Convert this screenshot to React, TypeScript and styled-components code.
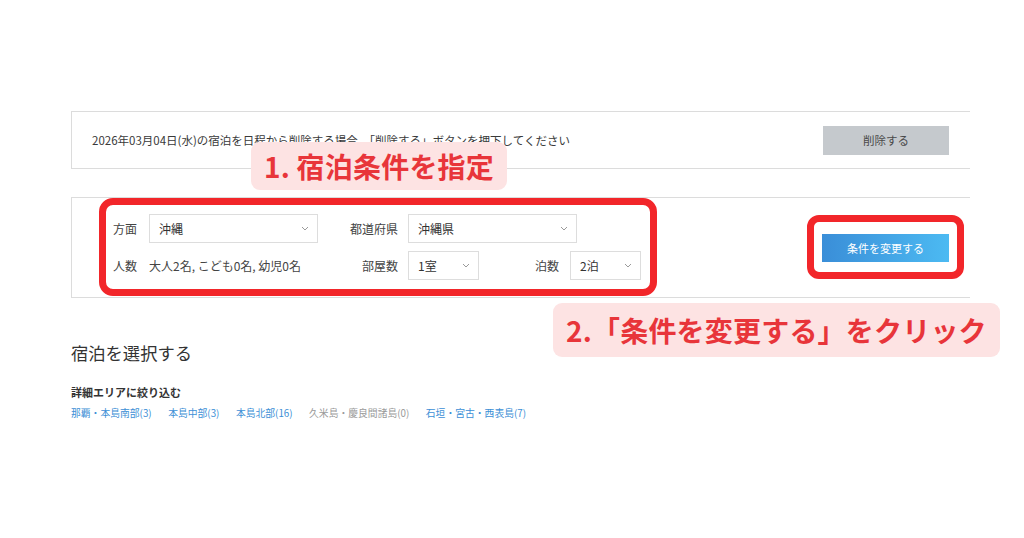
import styled, { createGlobalStyle } from 'styled-components';

const GlobalStyle = createGlobalStyle`
  html, body {
    margin: 0;
    padding: 0;
    background: #ffffff;
  }
  body {
    font-family: 'Noto Sans CJK JP', 'Noto Sans', sans-serif;
    color: #333333;
  }
`;

const Page = styled.div`
  position: relative;
  box-sizing: border-box;
  width: 1024px;
  height: 538px;
  padding: 111px 0 0 71px;
`;

const Content = styled.div`
  width: 899px;
`;

const Notice = styled.div`
  box-sizing: border-box;
  display: flex;
  align-items: center;
  justify-content: space-between;
  height: 58px;
  padding: 0 21px 0 20px;
  border: 1px solid #dcdcdc;
  border-right: none;
`;

const NoticeText = styled.span`
  font-size: 11.5px;
  line-height: 16px;
  color: #3a3a3a;
`;

const GreyButton = styled.div`
  display: flex;
  align-items: center;
  justify-content: center;
  width: 126px;
  height: 29px;
  background: #c5c9cd;
  color: #4a4a4a;
  font-size: 11.5px;
`;

const SearchPanel = styled.div`
  box-sizing: border-box;
  display: flex;
  align-items: center;
  justify-content: space-between;
  margin-top: 28px;
  padding: 0 6px 1px 27px;
  border: 1px solid #dcdcdc;
  border-right: none;
`;

const Highlight = styled.div<{ $pad: string; $radius?: number }>`
  box-sizing: border-box;
  border: 7px solid #f2262a;
  border-radius: ${({ $radius }) => $radius ?? 14}px;
  padding: ${({ $pad }) => $pad};
`;

const FieldGrid = styled.div`
  display: grid;
  grid-template-columns: 26px 169px 70px 233px;
  grid-auto-rows: 29px;
  column-gap: 10px;
  row-gap: 8px;
  align-items: center;
`;

const Label = styled.span<{ $right?: boolean }>`
  font-size: 12px;
  color: #444444;
  white-space: nowrap;
  text-align: ${({ $right }) => ($right ? 'right' : 'left')};
`;

const Value = styled.span`
  font-size: 12px;
  color: #444444;
  white-space: nowrap;
`;

const SelectBox = styled.div<{ $width: number }>`
  box-sizing: border-box;
  display: flex;
  align-items: center;
  justify-content: space-between;
  width: ${({ $width }) => $width}px;
  height: 29px;
  padding: 0 8px 0 9px;
  border: 1px solid #dddddd;
  background: #ffffff;
  font-size: 12px;
  color: #333333;
`;

const SubRow = styled.div`
  display: flex;
  align-items: center;
  gap: 11px;
`;

const Spacer = styled.div`
  flex: 1;
`;

const BlueButton = styled.div`
  display: flex;
  align-items: center;
  justify-content: center;
  width: 127px;
  height: 28px;
  background: linear-gradient(90deg, #3a8ed8 0%, #4cbaf2 100%);
  color: #ffffff;
  font-size: 11px;
`;

const Title = styled.h2`
  margin: 43px 0 0;
  font-size: 17.3px;
  line-height: 24px;
  font-weight: 400;
  color: #333333;
`;

const SubTitle = styled.div`
  margin-top: 19px;
  font-size: 11px;
  line-height: 16px;
  font-weight: 700;
  color: #333333;
`;

const AreaList = styled.div`
  display: flex;
  gap: 16.5px;
  margin-top: 6px;
`;

const AreaLink = styled.span<{ $disabled?: boolean }>`
  font-size: 9.8px;
  line-height: 14px;
  color: ${({ $disabled }) => ($disabled ? '#9a9a9a' : '#3d8fd6')};
  white-space: nowrap;
`;

const Callout = styled.div<{ $top: number; $left: number; $height: number }>`
  position: absolute;
  top: ${({ $top }) => $top}px;
  left: ${({ $left }) => $left}px;
  box-sizing: border-box;
  height: ${({ $height }) => $height}px;
  display: flex;
  align-items: center;
  padding: 0 13px 0 13px;
  background: #fde3e3;
  border-radius: 9px;
  color: #e8353a;
  font-size: 28px;
  font-weight: 700;
  white-space: nowrap;
  letter-spacing: 0.2px;
`;

function Chevron() {
  return (
    <svg width="8" height="5" viewBox="0 0 8 5" fill="none">
      <polyline points="1,1 4,4 7,1" stroke="#9a9a9a" strokeWidth="1" />
    </svg>
  );
}

function Select({ value, width }: { value: string; width: number }) {
  return (
    <SelectBox $width={width}>
      <span>{value}</span>
      <Chevron />
    </SelectBox>
  );
}

const areas = [
  { name: '那覇・本島南部(3)' },
  { name: '本島中部(3)' },
  { name: '本島北部(16)' },
  { name: '久米島・慶良間諸島(0)', disabled: true },
  { name: '石垣・宮古・西表島(7)' },
];

export default function App() {
  return (
    <Page>
      <GlobalStyle />
      <Content>
        <Notice>
          <NoticeText>
            2026年03月04日(水)の宿泊を日程から削除する場合、「削除する」ボタンを押下してください
          </NoticeText>
          <GreyButton>削除する</GreyButton>
        </Notice>

        <SearchPanel>
          <Highlight $pad="9px 9px 9px 7px">
            <FieldGrid>
              <Label>方面</Label>
              <Select value="沖縄" width={169} />
              <Label $right>都道府県</Label>
              <Select value="沖縄県" width={169} />

              <Label>人数</Label>
              <Value>大人2名, こども0名, 幼児0名</Value>
              <Label $right>部屋数</Label>
              <SubRow>
                <Select value="1室" width={71} />
                <Spacer />
                <Label>泊数</Label>
                <Select value="2泊" width={71} />
              </SubRow>
            </FieldGrid>
          </Highlight>
          <Highlight $pad="12px 8px 10px 8px" $radius={12}>
            <BlueButton>条件を変更する</BlueButton>
          </Highlight>
        </SearchPanel>

        <Title>宿泊を選択する</Title>
        <SubTitle>詳細エリアに絞り込む</SubTitle>
        <AreaList>
          {areas.map((a) => (
            <AreaLink key={a.name} $disabled={a.disabled}>
              {a.name}
            </AreaLink>
          ))}
        </AreaList>
      </Content>

      <Callout $top={142} $left={251} $height={48}>
        1. 宿泊条件を指定
      </Callout>
      <Callout $top={303} $left={553} $height={54}>
        2.「条件を変更する」をクリック
      </Callout>
    </Page>
  );
}
